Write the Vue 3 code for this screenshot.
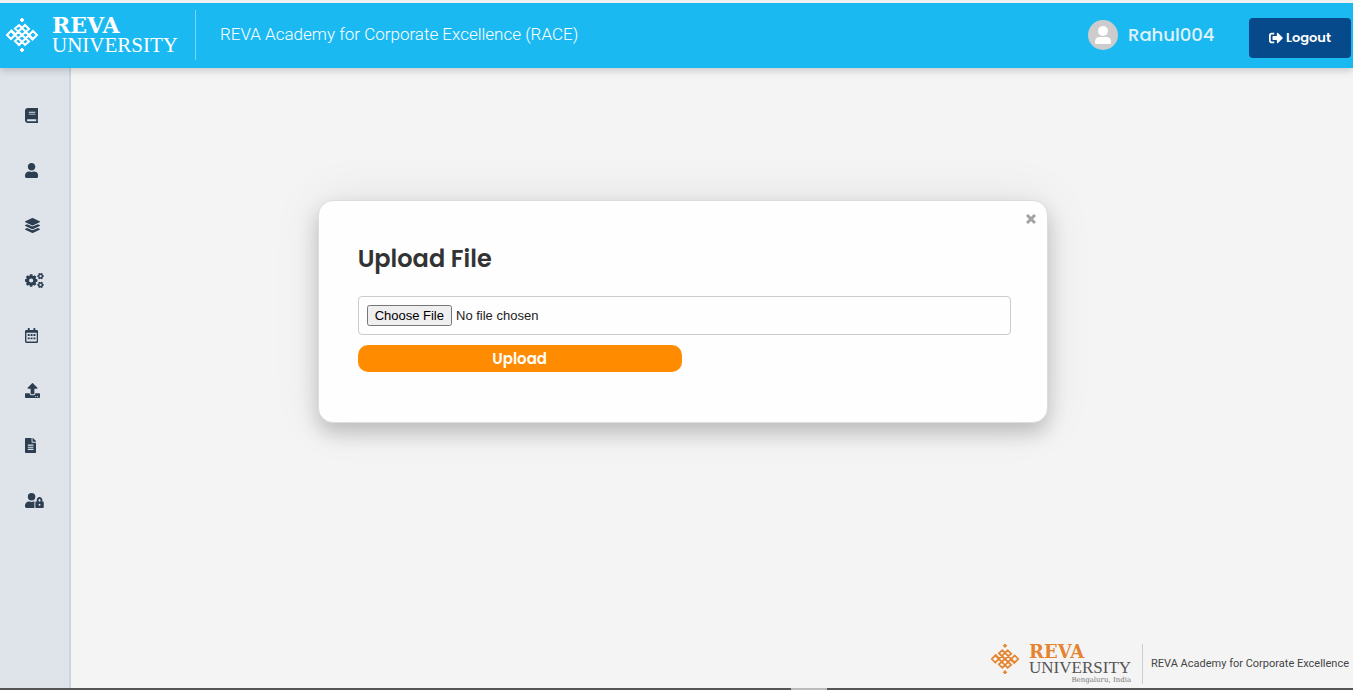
<script setup>
import { ref } from 'vue'

function gear(cx, cy, outer, inner, hole, teeth) {
  const step = (Math.PI * 2) / teeth
  const points = []
  for (let i = 0; i < teeth; i++) {
    const a = i * step
    const corners = [[-0.36, inner], [-0.26, outer], [0.26, outer], [0.36, inner]]
    for (const [k, r] of corners) {
      points.push(`${(cx + r * Math.cos(a + k * step)).toFixed(1)} ${(cy + r * Math.sin(a + k * step)).toFixed(1)}`)
    }
  }
  return `M${points.join('L')}ZM${cx - hole} ${cy}a${hole} ${hole} 0 1 0 ${hole * 2} 0a${hole} ${hole} 0 1 0 ${-hole * 2} 0Z`
}

const userPath = 'M224 256c70.7 0 128-57.3 128-128S294.7 0 224 0 96 57.3 96 128s57.3 128 128 128zm89.6 32h-16.7c-22.2 10.2-46.9 16-72.9 16s-50.6-5.8-72.9-16h-16.7C60.2 288 0 348.2 0 422.4V464c0 26.5 21.5 48 48 48h352c26.5 0 48-21.5 48-48v-41.6c0-74.2-60.2-134.4-134.4-134.4z'

const items = [
  { label: 'Courses', w: 448, d: 'M448 360V24c0-13.3-10.7-24-24-24H96C43 0 0 43 0 96v320c0 53 43 96 96 96h328c13.3 0 24-10.7 24-24v-16c0-7.5-3.5-14.3-8.9-18.7-4.2-15.4-4.2-59.3 0-74.7 5.4-4.3 8.9-11.1 8.9-18.6zM128 134c0-3.3 2.7-6 6-6h212c3.3 0 6 2.7 6 6v20c0 3.3-2.7 6-6 6H134c-3.3 0-6-2.7-6-6v-20zm0 64c0-3.3 2.7-6 6-6h212c3.3 0 6 2.7 6 6v20c0 3.3-2.7 6-6 6H134c-3.3 0-6-2.7-6-6v-20zm253.4 250H96c-17.7 0-32-14.3-32-32 0-17.6 14.4-32 32-32h285.4c-1.9 17.1-1.9 46.9 0 64z' },
  { label: 'Users', w: 448, d: userPath },
  { label: 'Batches', w: 512, d: 'M12.41 148.02l232.94 105.67c6.8 3.09 14.49 3.09 21.29 0l232.94-105.67c16.55-7.51 16.55-32.52 0-40.03L266.65 2.31a25.607 25.607 0 0 0-21.29 0L12.41 107.98c-16.55 7.51-16.55 32.53 0 40.04zm487.18 88.28l-58.09-26.33-161.64 73.27c-7.56 3.43-15.59 5.17-23.86 5.17s-16.29-1.74-23.86-5.17L70.51 209.97l-58.1 26.33c-16.55 7.5-16.55 32.5 0 40l232.94 105.59c6.8 3.08 14.49 3.08 21.29 0L499.59 276.3c16.55-7.5 16.55-32.5 0-40zm0 127.8l-57.87-26.23-161.86 73.37c-7.56 3.43-15.59 5.17-23.86 5.17s-16.29-1.74-23.86-5.17L70.29 337.87 12.41 364.1c-16.55 7.5-16.55 32.5 0 40l232.94 105.59c6.8 3.08 14.49 3.08 21.29 0L499.59 404.1c16.55-7.5 16.55-32.5 0-40z' },
  { label: 'Settings', w: 640, d: gear(210, 256, 218, 172, 72, 8) + gear(530, 108, 112, 88, 38, 6) + gear(530, 404, 112, 88, 38, 6) },
  { label: 'Calendar', w: 448, d: 'M48 64H96V12Q96 0 108 0H148Q160 0 160 12V64H288V12Q288 0 300 0H340Q352 0 352 12V64H400Q448 64 448 112V464Q448 512 400 512H48Q0 512 0 464V112Q0 64 48 64ZM48 160V458Q48 464 54 464H394Q400 464 400 458V160ZM92 204h68v68H92zM190 204h68v68h-68zM288 204h68v68h-68zM92 320h68v68H92zM190 320h68v68h-68zM288 320h68v68h-68z' },
  { label: 'Upload', w: 512, d: 'M296 384h-80c-13.3 0-24-10.7-24-24V192h-87.700c-17.800 0-26.700-21.500-14.100-34.100L242.300 5.700c7.500-7.500 19.800-7.500 27.300 0l152.200 152.200c12.600 12.600 3.700 34.100-14.100 34.100H320v168c0 13.300-10.700 24-24 24zm216-8v112c0 13.300-10.700 24-24 24H24c-13.300 0-24-10.700-24-24V376c0-13.300 10.700-24 24-24h136v8c0 30.900 25.100 56 56 56h80c30.900 0 56-25.100 56-56v-8h136c13.300 0 24 10.700 24 24zm-124 88c0-11-9-20-20-20s-20 9-20 20 9 20 20 20 20-9 20-20zm64 0c0-11-9-20-20-20s-20 9-20 20 9 20 20 20 20-9 20-20z' },
  { label: 'Reports', w: 384, d: 'M224 136V0H24C10.700 0 0 10.700 0 24v464c0 13.300 10.700 24 24 24h336c13.300 0 24-10.700 24-24V160H248c-13.200 0-24-10.800-24-24zM96 224H288V264H96ZM96 296H288V336H96ZM96 368H288V408H96ZM384 121.900v6.100H256V0h6.100c6.400 0 12.500 2.500 17 7l97.900 98c4.500 4.500 7 10.600 7 16.900z' },
  { label: 'Permissions', w: 640, d: 'M224 256A128 128 0 1 0 224 0A128 128 0 1 0 224 256ZM320 320Q320 300 334 289Q324 288 313.600 288H296.900Q224 320 151.100 288H134.400C60.200 288 0 348.200 0 422.400V464Q0 512 48 512H330Q320 498 320 480ZM608 288H592V242C592 186 551 136 496 136S400 186 400 242V288H384Q352 288 352 320V480Q352 512 384 512H608Q640 512 640 480V320Q640 288 608 288ZM464 288V240Q466 208 496 208T528 240V288ZM496 432A32 32 0 1 1 496 368A32 32 0 1 1 496 432Z' }
]

const knotArm = 'M11 17L6.500 12.500L2 17L6 21L20 7L24 11L17 17M17 17L10 10.500L14 7L28 21'
const turns = [0, 180]
const open = ref(true)
</script>

<template>
  <div class="page">
    <header class="topbar">
      <a class="brand" href="#" aria-label="REVA University">
        <svg class="knot" viewBox="0 0 34 34" aria-hidden="true">
          <path v-for="t in turns" :key="t" :d="knotArm" :transform="`rotate(${t} 17 17)`" />
          <path class="gem" d="M17 0l2 2-2 2-2-2zM17 30l2 2-2 2-2-2z" />
        </svg>
        <span class="wordmark"><b>REVA</b><span>UNIVERSITY</span></span>
      </a>
      <p class="academy">REVA Academy for Corporate Excellence (RACE)</p>
      <div class="account">
        <svg class="avatar" viewBox="0 0 30 30" aria-hidden="true">
          <circle cx="15" cy="15" r="15" fill="#ccc" />
          <circle cx="15" cy="11" r="5" fill="#fff" />
          <path d="M7 23v-1q0-5 5-5h6q5 0 5 5v1q0 1-1 1H8q-1 0-1-1z" fill="#fff" />
        </svg>
        <span class="username">Rahul004</span>
        <button class="logout" type="button">
          <svg viewBox="0 0 512 512" aria-hidden="true"><path d="M497 273L329 441c-15 15-41 4.500-41-17v-96H152c-13.300 0-24-10.700-24-24v-96c0-13.300 10.700-24 24-24h136V88c0-21.400 25.900-32 41-17l168 168c9.300 9.400 9.300 24.600 0 34zM192 436v-40c0-6.600-5.400-12-12-12H96c-17.700 0-32-14.300-32-32V160c0-17.700 14.300-32 32-32h84c6.600 0 12-5.400 12-12V76c0-6.600-5.400-12-12-12H96c-53 0-96 43-96 96v192c0 53 43 96 96 96h84c6.600 0 12-5.400 12-12z" /></svg>
          Logout
        </button>
      </div>
    </header>

    <div class="body">
      <nav class="sidebar" aria-label="Main">
        <a v-for="item in items" :key="item.label" href="#" :aria-label="item.label">
          <svg :viewBox="`0 0 ${item.w} 512`" aria-hidden="true"><path :d="item.d" fill-rule="evenodd" /></svg>
        </a>
      </nav>

      <main class="content">
        <form v-if="open" class="dialog" @submit.prevent>
          <button class="close" type="button" aria-label="Close" @click="open = false">
            <svg viewBox="0 0 10 10" aria-hidden="true"><path d="M1 1l8 8M9 1l-8 8" /></svg>
          </button>
          <h2><label for="file">Upload File</label></h2>
          <input id="file" class="file" type="file" />
          <button class="upload" type="submit">Upload</button>
        </form>

        <footer class="footer">
          <div class="brand small">
            <svg class="knot" viewBox="0 0 34 34" aria-hidden="true">
              <path v-for="t in turns" :key="t" :d="knotArm" :transform="`rotate(${t} 17 17)`" />
              <path class="gem" d="M17 0l2 2-2 2-2-2zM17 30l2 2-2 2-2-2z" />
            </svg>
            <span class="wordmark"><b>REVA</b><span>UNIVERSITY</span><small>Bengaluru, India</small></span>
          </div>
          <p>REVA Academy for Corporate Excellence</p>
        </footer>
      </main>
    </div>
    <div class="scrollbar"><span></span></div>
  </div>
</template>

<style>
body { background: #f4f4f4; }
</style>

<style scoped>
* { box-sizing: border-box; }
p, h2 { margin: 0; font-weight: inherit; }
button { font-family: inherit; border: 0; cursor: pointer; }
.page {
  min-height: 100vh;
  display: flex;
  flex-direction: column;
  font-family: Poppins, Inter, "Open Sans", sans-serif;
  background: #f4f4f4;
}
.topbar {
  position: relative;
  display: flex;
  align-items: center;
  height: 68px;
  padding: 0 2px 2px 5px;
  border-top: 3px solid #eff1f3;
  background: #1bb9f1;
  box-shadow: 0 2px 8px rgba(0, 0, 0, 0.2);
}
.brand {
  display: flex;
  align-items: center;
  gap: 13px;
  height: 50px;
  width: 191px;
  border-right: 1px solid #76d5f7;
  color: #fff;
  text-decoration: none;
}
.knot { width: 34px; height: 34px; flex: none; }
.knot path { fill: none; stroke: currentColor; stroke-width: 2; }
.knot .gem { fill: currentColor; stroke-width: 1; }
.wordmark { display: flex; flex-direction: column; }
.wordmark b { font: bold 22px/20px "DejaVu Serif", serif; }
.wordmark span { font: 21px/20px "Liberation Serif", serif; }
.academy {
  margin-left: 24px;
  padding-bottom: 2px;
  font: 300 17px/24px Roboto, sans-serif;
  color: #fff;
}
.account { margin-left: auto; display: flex; align-items: center; }
.avatar { width: 30px; height: 30px; margin-right: 10px; }
.username { width: 121px; font-size: 18px; font-weight: 500; color: #e0f3fc; }
.logout {
  display: flex;
  align-items: center;
  justify-content: center;
  gap: 3px;
  width: 102px;
  height: 40px;
  margin-top: 6px;
  padding: 0;
  border-radius: 4px;
  background: #064a8b;
  color: #fff;
  font-size: 13px;
  font-weight: 600;
}
.logout svg { width: 14px; height: 14px; fill: currentColor; }
.body { flex: 1; display: flex; }
.sidebar {
  flex: none;
  width: 71px;
  padding: 40px 0 0 25px;
  display: flex;
  flex-direction: column;
  gap: 40px;
  background: #dfe4eb;
  border-right: 2px solid #ccd6dd;
}
.sidebar a { display: flex; height: 15px; color: #2c3e50; }
.sidebar svg { height: 15px; fill: currentColor; }
.content {
  flex: 1;
  display: flex;
  flex-direction: column;
  align-items: center;
  padding-top: 132px;
}
.dialog {
  position: relative;
  width: 57%;
  margin-right: 58px;
  padding: 40px 36px 50px 39px;
  border: 1px solid #ddd;
  border-radius: 15px;
  background: #fefefe;
  box-shadow: 0 10px 20px rgba(0, 0, 0, 0.2), 0 0 50px rgba(0, 0, 0, 0.08);
}
h2 { font-size: 24px; line-height: 36px; font-weight: 600; color: #333; }
.close {
  position: absolute;
  top: 13px;
  right: 11px;
  width: 10px;
  height: 10px;
  padding: 0;
  background: none;
}
.close svg { display: block; width: 10px; height: 10px; stroke: #a3a3a3; stroke-width: 3; }
.file {
  display: block;
  width: 100%;
  margin-top: 19px;
  padding: 8px;
  border: 1px solid #ccc;
  border-radius: 4px;
  font: 13px "Liberation Sans", sans-serif;
  color: #222;
}
.upload {
  width: 324px;
  max-width: 100%;
  height: 27px;
  margin-top: 10px;
  padding: 0;
  border-radius: 10px;
  background: #ff8c00;
  color: #fff;
  font-size: 15px;
  font-weight: 600;
}
.footer {
  align-self: flex-end;
  margin-top: auto;
  padding: 0 4px 4px 0;
  display: flex;
  align-items: center;
}
.footer p { padding-left: 8px; font: 11px/16px Roboto, sans-serif; color: #444; }
.small { height: 40px; width: 153px; gap: 9px; border-color: #ccc; color: #e5842f; }
.small .knot { width: 30px; height: 30px; margin-bottom: 10px; }
.small b { font-size: 18px; line-height: 16px; }
.small span span { font-size: 17px; line-height: 16px; color: #555; }
.small small { align-self: flex-end; font: 7px/8px "DejaVu Serif", serif; color: #777; }
.scrollbar { height: 2px; background: #555; }
.scrollbar span { display: block; width: 36px; height: 2px; margin-left: 791px; background: #bbb; }
</style>
